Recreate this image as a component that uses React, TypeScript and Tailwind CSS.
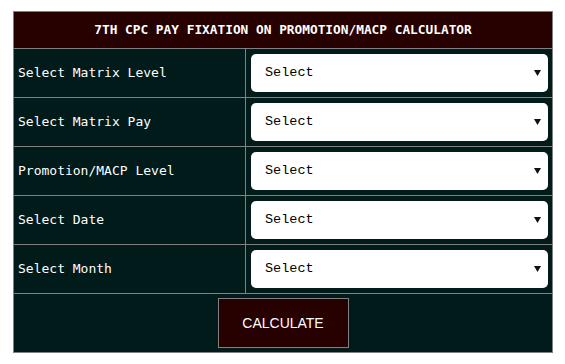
import React from "react";

const rows = [
  "Select Matrix Level",
  "Select Matrix Pay",
  "Promotion/MACP Level",
  "Select Date",
  "Select Month",
];

const labelFont = { fontFamily: '"DejaVu Sans Mono", monospace' };

const SelectBox: React.FC = () => (
  <div className="relative h-[38px] w-full rounded-[5px] bg-white">
    <select
      className="h-full w-full appearance-none rounded-[5px] bg-transparent pl-[14px] text-[13.5px] text-black outline-none"
      style={{ fontFamily: '"Liberation Mono", "Courier New", monospace' }}
      defaultValue=""
    >
      <option value="">Select</option>
    </select>
    <svg
      className="pointer-events-none absolute right-[7px] top-[16px]"
      width="7"
      height="6"
      viewBox="0 0 7 6"
    >
      <path d="M0 0 H7 L3.5 6 Z" fill="#111" />
    </svg>
  </div>
);

export default function App() {
  return (
    <div className="pt-[11px] pl-[13px]">
      <div className="w-[540px] border border-[#808080] bg-[#011a1a] text-white">
        <div
          className="flex h-[37px] items-center justify-center border-b border-[#808080] bg-[#270000] text-[12.8px] font-bold"
          style={labelFont}
        >
          7TH CPC PAY FIXATION ON PROMOTION/MACP CALCULATOR
        </div>
        {rows.map((label) => (
          <div key={label} className="flex h-[49px] border-b border-[#808080]">
            <div
              className="flex w-[232px] items-center border-r border-[#808080] pl-[4px] text-[13px]"
              style={labelFont}
            >
              {label}
            </div>
            <div className="flex flex-1 items-center pl-[5px] pr-[4px]">
              <SelectBox />
            </div>
          </div>
        ))}
        <div className="flex h-[58px] items-center justify-center">
          <button
            className="h-[50px] w-[131px] border border-[#808080] bg-[#270000] text-[14px] text-white"
            style={{ fontFamily: '"Liberation Sans", Arial, sans-serif' }}
          >
            CALCULATE
          </button>
        </div>
      </div>
    </div>
  );
}
